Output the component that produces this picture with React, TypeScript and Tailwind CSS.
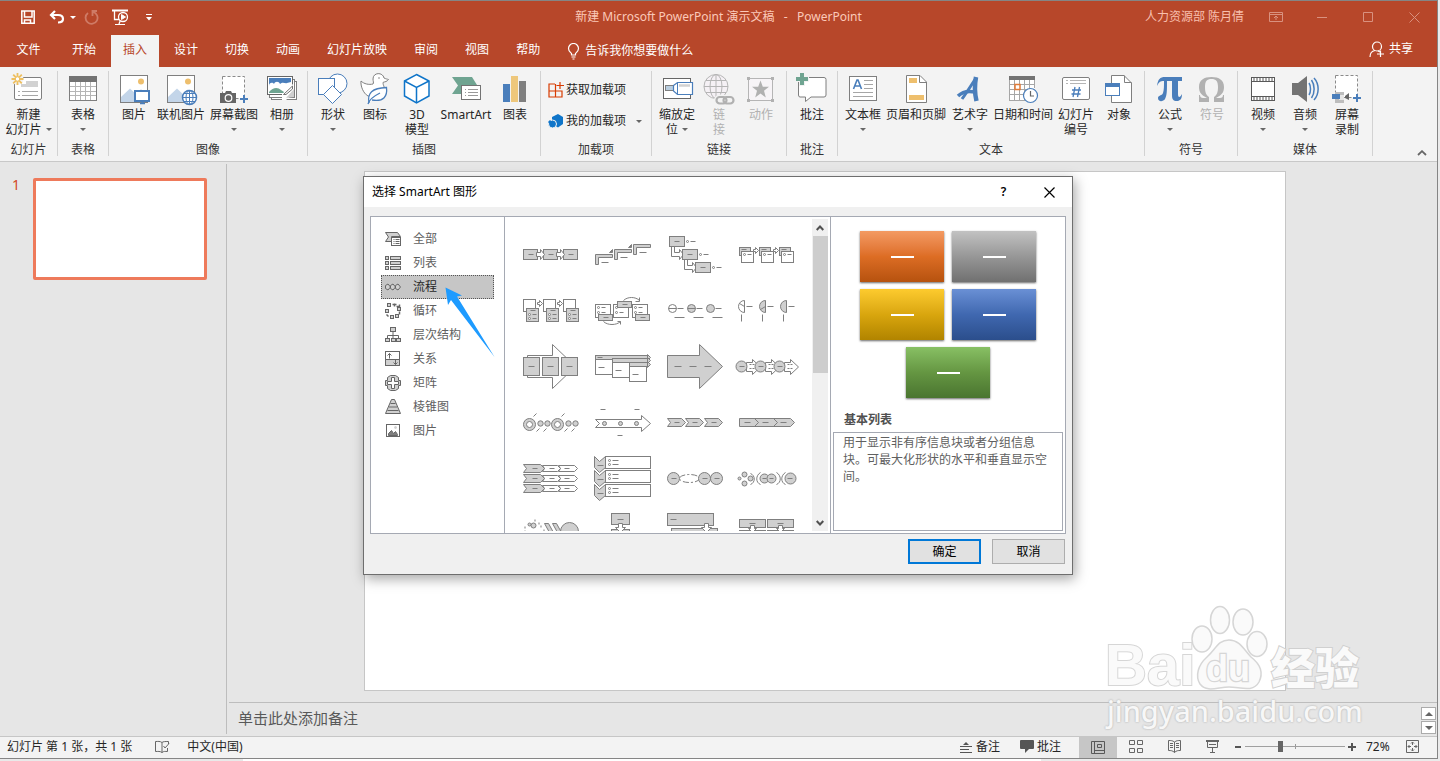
import React from "react";

type Kids = { children?: React.ReactNode };

const G = "#7f7f7f";
const B = "#4a7ebb";
const F = "#d0d0d0";

function Ico({ children }: Kids) {
  return (
    <svg width="32" height="32" viewBox="0 0 32 32" fill="none" className="block shrink-0 overflow-visible" aria-hidden="true">
      {children}
    </svg>
  );
}

function Caret({ className = "" }: { className?: string }) {
  return (
    <svg width="6" height="3" viewBox="0 0 6 3" className={`inline-block ${className}`} aria-hidden="true">
      <path d="M0 0H6L3 3Z" fill="currentColor" />
    </svg>
  );
}

function Cmd({ icon, lines, w, caret, inlineCaret, disabled }: { icon: React.ReactNode; lines: string[]; w: string; caret?: boolean; inlineCaret?: boolean; disabled?: boolean }) {
  return (
    <button type="button" disabled={disabled} className={`flex shrink-0 flex-col items-center ${w} ${disabled ? "text-[#b1b1b1]" : "text-[#262626]"}`}>
      {icon}
      <span className="mt-[3px] block whitespace-nowrap leading-[15px]">
        {lines.map((l, i) => (
          <span key={l} className="flex items-center justify-center gap-1">
            {l}
            {inlineCaret && i === lines.length - 1 && <Caret className="text-[#666]" />}
          </span>
        ))}
      </span>
      {caret && <Caret className="mt-[6px] text-[#666]" />}
    </button>
  );
}

function Group({ title, children }: { title: string; children: React.ReactNode }) {
  return (
    <section aria-label={title} className="flex shrink-0 flex-col justify-between border-r border-[#d2d2d2] px-1">
      <div className="flex items-start justify-center">{children}</div>
      <div className="text-center leading-3 text-[#333]">{title}</div>
    </section>
  );
}

/* ---------- ribbon icons ---------- */

const PictureBase = () => (
  <>
    <rect x="2.5" y="3.5" width="27" height="27" fill="#fff" stroke={G} />
    <circle cx="23" cy="9.5" r="3" fill="#eebf6d" />
    <path d="M3 25L12 16.500L22 26V30H3Z" fill="#c3d5e9" />
    <path d="M17 22L23 17L29 22V30H22Z" fill="#dbe5f1" />
  </>
);

const icons = {
  newSlide: (
    <Ico>
      <g transform="translate(-2 0)">
        <rect x="3.500" y="5.500" width="27" height="22" rx="1.500" fill="#fff" stroke={G} />
        <path d="M15 9H27V15H10V12H15Z" fill="#d2d2d2" />
        <path d="M7 19.500H9M11 19.500H27M7 23.500H9M11 23.500H27" stroke="#a6a6a6" />
        <circle cx="6.500" cy="7" r="6" fill="#f3f3f3" />
        <path d="M6.500 1V13M.5 7H12.500M2.200 2.700L10.800 11.300M10.800 2.700L2.200 11.300" stroke="#eebf5f" strokeWidth="1.800" />
        <circle cx="6.500" cy="7" r="2.200" fill="#fff" stroke="#eebf5f" />
      </g>
    </Ico>
  ),
  table: (
    <Ico>
      <rect x="2.500" y="4.500" width="27" height="24" fill="#fff" stroke={G} />
      <rect x="2" y="4" width="28" height="6" fill="#737373" />
      <path d="M8.500 10V28M13.500 10V28M18.500 10V28M23.500 10V28M3 14.500H29M3 19.500H29M3 23.500H29" stroke="#b5b5b5" />
    </Ico>
  ),
  picture: (
    <Ico>
      <PictureBase />
      <rect x="17" y="19" width="14" height="10" fill="#fff" stroke={B} strokeWidth="2" />
      <path d="M22 31.500H27" stroke={B} strokeWidth="1.500" />
      <path d="M24.500 29V32" stroke={B} strokeWidth="2" />
    </Ico>
  ),
  online: (
    <Ico>
      <PictureBase />
      <circle cx="24.500" cy="25.500" r="7" fill="#fff" stroke={B} strokeWidth="1.500" />
      <path d="M17.500 25.500H31.500M24.500 18.500V32.500M19 21.500H30M19 29.500H30" stroke={B} />
      <ellipse cx="24.500" cy="25.500" rx="3.500" ry="7" stroke={B} />
    </Ico>
  ),
  screenshot: (
    <Ico>
      <rect x="4.500" y="4.500" width="22" height="22" fill="#fff" stroke="#8a8a8a" strokeDasharray="3 2" />
      <path d="M2 21H7L8 19H13L14 21H18V31H2Z" fill="#666" />
      <circle cx="10.500" cy="26" r="3.300" stroke="#fff" strokeWidth="1.200" fill="#666" />
      <path d="M22 27H30M26 23V31" stroke={B} strokeWidth="2" />
    </Ico>
  ),
  album: (
    <Ico>
      <rect x="5.500" y="9.500" width="25" height="18" fill="#fff" stroke={G} />
      <rect x="3.500" y="7.500" width="25" height="18" fill="#fff" stroke={G} />
      <rect x="1.500" y="4.500" width="25" height="18" fill="#fff" stroke="#666" />
      <rect x="3" y="6" width="22" height="8" fill={B} />
      <path d="M3 14C3 10 7 10 8 12C9 9 13 9 14 12C17 9 19 12 21 11L25 10V15H3Z" fill="#fff" />
      <path d="M3 20C7 15 12 15 15 18L18 20V21H3Z" fill="#6fa491" />
      <path d="M16 22L27 12V22L20 28H16Z" fill="#fff" />
      <path d="M17.500 22.500L26.500 14V17L20 22.500Z" fill="#fff" stroke="#737373" />
      <path d="M20 26L28 17V25Z" fill="#cfcfcf" />
    </Ico>
  ),
  shapes: (
    <Ico>
      <circle cx="20.500" cy="11.500" r="9.500" fill="#fff" stroke={B} />
      <rect x="1.500" y="6.500" width="16" height="16" fill="#fff" stroke={B} />
      <path d="M15.500 13.500L24.500 22.500L15.500 31.500L6.500 22.500Z" fill="#fff" stroke={B} />
    </Ico>
  ),
  duck: (
    <Ico>
      <path d="M2 9C5 12 10 13 14 12C15 11 14 9 14 7C14 0 24 0 25 6C27 7 28 7 29.500 7.500C28 9.500 26 10 24.500 10C23 12 26 15 26 19C25 25 17 27 9 24C4 21 1.500 14 2 9Z" fill="#fff" stroke={G} />
      <circle cx="20" cy="6" r=".8" fill={G} />
      <path d="M10 31C8 21 13 16 27.500 15.500C28.500 24 25 30 13 28" fill="#fff" stroke={B} strokeWidth="1.300" />
      <path d="M9 32C10 28 15 24 21 21" stroke={B} strokeWidth="1.300" />
    </Ico>
  ),
  cube: (
    <Ico>
      <path d="M15.500 2.500L28 9V24L15.500 31L3.500 24V9Z" fill="#fff" stroke="#0f75c9" strokeWidth="1.500" />
      <path d="M3.500 9L15.500 15.500L28 9M15.500 15.500V31" stroke="#0f75c9" strokeWidth="1.500" />
    </Ico>
  ),
  smartart: (
    <Ico>
      <path d="M2 5H22L27 13H11V22H2L8 13.500Z" fill="#6fa491" />
      <rect x="11.500" y="13.500" width="19" height="14" fill="#fff" stroke="#737373" />
      <path d="M15 17.500H16M18 17.500H28M15 20.500H16M18 20.500H28M15 23.500H16M18 23.500H28" stroke="#999" />
    </Ico>
  ),
  chart: (
    <Ico>
      <path d="M4 12H11V30H4Z" fill={B} />
      <path d="M12 4H19V30H12Z" fill="#eec77b" />
      <path d="M20 9H27V30H20Z" fill="#7f7f7f" />
    </Ico>
  ),
  zoom: (
    <Ico>
      <rect x="2.500" y="6.500" width="27" height="20" fill="#fff" stroke="#666" />
      <rect x="4.500" y="13.500" width="8" height="5" fill="#b9cee0" stroke={G} />
      <path d="M12.500 13.500L16.500 10.500H31.500V22.500H16.500L12.500 19Z" fill="#fff" stroke={B} strokeWidth="1.200" />
      <path d="M16.500 11V22" stroke={B} />
      <path d="M18 13.500H29" stroke="#d2d2d2" strokeWidth="2.500" />
    </Ico>
  ),
  link: (
    <Ico>
      <circle cx="13" cy="14.500" r="12" stroke="#b5b5b5" fill="#f5f1f5" />
      <path d="M1 14.500H25M13 2.500V26.500M3 8.500H23M3 20.500H23" stroke="#b5b5b5" />
      <ellipse cx="13" cy="14.500" rx="6" ry="12" stroke="#b5b5b5" />
      <rect x="13.500" y="25" width="10" height="6.500" rx="3.200" stroke="#f3f3f3" strokeWidth="5" />
      <rect x="13.500" y="25" width="10" height="6.500" rx="3.200" stroke="#b1b1b1" strokeWidth="2.200" />
      <rect x="20.500" y="25" width="10" height="6.500" rx="3.200" stroke="#b1b1b1" strokeWidth="2.200" />
    </Ico>
  ),
  action: (
    <Ico>
      <rect x="3.500" y="6.500" width="24" height="22" fill="#f7f4f7" stroke="#b5b5b5" />
      <path d="M2 5H5V8H2ZM26 5H29V8H26ZM2 27H5V30H2ZM26 27H29V30H26Z" fill="#b1b1b1" />
      <path d="M15.500 8.500L17.800 14.800H24L19 18.800L20.800 25.500L15.500 21.500L10.200 25.500L12 18.800L7 14.800H13.200Z" fill="#b1b1b1" />
    </Ico>
  ),
  comment: (
    <Ico>
      <path d="M4 5.500H28Q30 5.500 30 7.500V23Q30 25 28 25H15L9.500 29.500V25H4Q2.500 25 2.500 23V7Z" fill="#fff" stroke={G} />
      <path d="M6 0V14M-1 7H13" stroke="#f3f3f3" strokeWidth="6" />
      <path d="M6 1V13M0 7H12" stroke="#6fa491" strokeWidth="4" />
    </Ico>
  ),
  textbox: (
    <Ico>
      <rect x="2.500" y="4.500" width="27" height="24" fill="#fff" stroke={G} />
      <path d="M6.500 17L10 8H11L14.500 17M7.700 14H13.300" stroke={B} strokeWidth="1.600" />
      <path d="M17 8.500H26M17 12.500H26M17 16.500H26M6 20.500H26M6 24.500H26" stroke="#a6a6a6" />
    </Ico>
  ),
  header: (
    <Ico>
      <path d="M6.500 3.500H20L26.500 10V30.500H6.500Z" fill="#fff" stroke={G} />
      <path d="M19.500 3.500V10.500H26.500" stroke={G} />
      <path d="M9 6H17V11H9ZM9 23H24V28H9Z" fill="#eebf6d" />
    </Ico>
  ),
  wordart: (
    <Ico>
      <path d="M8 27C13 20 18 12 22 6" stroke={B} strokeWidth="3" />
      <path d="M22 5C20.500 13 20.500 21 22.500 29" stroke={B} strokeWidth="4.500" />
      <path d="M4 24C9 19 14 18.500 21 20" stroke={B} strokeWidth="3.500" />
    </Ico>
  ),
  date: (
    <Ico>
      <rect x="2.500" y="5.500" width="25" height="23" fill="#fff" />
      <path d="M2.500 8V28.500M7.500 8V28M12.500 8V28M17.500 8V28M22.500 8V28M27.500 8V16M3 12.500H28M3 17.500H28M3 22.500H20M2 28.500H18" stroke="#a6a6a6" />
      <path d="M2 4H28V8H2Z" fill="#737373" />
      <rect x="8" y="12.500" width="5" height="5" fill="#fff" stroke="#e07b39" strokeWidth="1.500" />
      <circle cx="23.500" cy="23.500" r="7" fill="#fff" stroke={B} strokeWidth="1.200" />
      <path d="M23.500 19V24H27" stroke="#666" strokeWidth="1.200" />
    </Ico>
  ),
  number: (
    <Ico>
      <rect x="2.500" y="5.500" width="27" height="22" rx="1.500" fill="#fff" stroke={G} />
      <path d="M6 8.500H8M10 8.500H26M6 11.500H8M10 11.500H26" stroke="#b5b5b5" />
      <path d="M15 15L13 25M19.500 15L17.500 25M12 18H21M11.500 22H20.500" stroke={B} strokeWidth="1.300" />
    </Ico>
  ),
  object: (
    <Ico>
      <path d="M8.500 3.500H21L28.500 11V30.500H8.500Z" fill="#fff" stroke={G} />
      <path d="M21.500 3.500V10.500H28.500" stroke={G} />
      <rect x="2.500" y="11.500" width="14" height="12" fill="#fff" stroke={B} />
      <path d="M2 11H17V15H2Z" fill={B} />
    </Ico>
  ),
  pi: (
    <Ico>
      <path d="M3 14C4 7 6 5 11 5H28V9H24V22C24 26 26 26 28 22C28 27 26 29 23 29C19 29 18 27 18 23V9H13C13 19 13 23 11 27C9 30 4 30 4 26C4 23 8 24 9 21C10 18 10 14 10 9C6 9 5 10 3 14Z" fill={B} />
    </Ico>
  ),
  omega: (
    <Ico>
      <path d="M3 30V23H4C4 25 5 26 7 26H11C5 23 3 20 3 15C3 8 8 5 15.500 5C23 5 28 8 28 15C28 20 26 23 20 26H24C26 26 27 25 27 23H28V30H18V25C21 23 22 20 22 15C22 9 20 7 15.500 7C11 7 9 9 9 15C9 20 10 23 13 25V30Z" fill="#b1b1b1" />
    </Ico>
  ),
  video: (
    <Ico>
      <rect x="4.500" y="5.500" width="23" height="23" fill="#fff" stroke="#595959" />
      <path d="M4 9.500H28M4 24.500H28" stroke="#595959" />
      <path d="M6.500 7.500H27M6.500 26.500H27" stroke="#595959" strokeWidth="3" strokeDasharray="1 2" />
    </Ico>
  ),
  audio: (
    <Ico>
      <path d="M3 11H9L18 4V30L9 23H3Z" fill="#737373" />
      <path d="M20 11C22 14 22 20 20 23M22.500 8C26 13 26 21 22.500 26M25 6C30.500 12 30.500 22 25 28" stroke={B} strokeWidth="1.500" />
    </Ico>
  ),
  record: (
    <Ico>
      <rect x="4.500" y="3.500" width="22" height="22" fill="#fff" stroke="#8a8a8a" strokeDasharray="3 2" />
      <path d="M4 20H13V31H4Z" fill="#bdbdbd" />
      <path d="M13 23H8V28H13Z" fill="#e6e6e6" />
      <path d="M1 22H9V27H1Z" fill={B} />
      <path d="M14 24L18 21V28L14 26Z" fill="#666" />
      <path d="M22 26H30M26 22V30" stroke={B} strokeWidth="2" />
    </Ico>
  ),
};

/* ---------- SmartArt gallery thumbnails ---------- */

function Thumb({ label, children }: { label: string; children: React.ReactNode }) {
  return (
    <button type="button" aria-label={label} className="h-14 w-[72px]">
      <svg width="72" height="56" viewBox="0 0 72 56" fill="none" stroke={G} className="block" aria-hidden="true">
        <g transform="translate(.5 .5)">{children}</g>
      </svg>
    </button>
  );
}

const R = ({ x, y, w, h, g }: { x: number; y: number; w: number; h: number; g?: boolean }) => <rect x={x} y={y} width={w} height={h} fill={g ? F : "#fff"} />;
const C = ({ x, y, r, g }: { x: number; y: number; r: number; g?: boolean }) => <circle cx={x} cy={y} r={r} fill={g ? F : "#fff"} />;
const D = ({ x, y, w = 5 }: { x: number; y: number; w?: number }) => <path d={`M${x} ${y}h${w}`} />;
const A = ({ x, y }: { x: number; y: number }) => <path d={`M${x} ${y - 1}h2v-2l3 3l-3 3v-2h-2z`} fill="#fff" />;
const Item = ({ x, y, w = 4 }: { x: number; y: number; w?: number }) => (
  <>
    <C x={x} y={y} r={1} />
    <D x={x + 3} y={y} w={w} />
  </>
);
const Chev = ({ x, y, w, h, g }: { x: number; y: number; w: number; h: number; g?: boolean }) => (
  <path d={`M${x} ${y - h}h${w - h}l${h} ${h}l${-h} ${h}h${-(w - h)}l${h - 1} ${-h}z`} fill={g ? F : "#fff"} />
);

const thumbs: [string, React.ReactNode][] = [
  ["基本流程", <>{[8, 28, 48].map((x) => <g key={x}><R x={x} y={23} w={14} h={10} g /><D x={x + 5} y={28} /></g>)}{[21, 41].map((x) => <path key={x} d={`M${x} 26h4v-3l4 5l-4 5v-3h-4z`} fill="#fff" />)}</>],
  ["步骤上移流程", <>{[[8, 28], [27, 23], [46, 18]].map(([x, y]) => <g key={x}><path d={`M${x} ${y}h17v3h-14v7h-3z`} fill={F} /><D x={x + 6} y={y + 8} w={7} /></g>)}<path d="M22 26L25 23V26ZM41 21L44 18V21Z" fill={G} /></>],
  ["步骤下移流程", <>{[0, 13].map((o) => <path key={o} d={`M${12 + o} ${20 + o}v10h8v3l4-5l-4-5v3h-5v-6z`} fill="#fff" />)}{[0, 13, 26].map((o) => <g key={o}><R x={10 + o} y={10 + o} w={15} h={10} g /><D x={15 + o} y={15 + o} /><Item x={28 + o} y={15 + o} w={5} /></g>)}</>],
  ["重点流程", <>{[0, 20, 40].map((o) => <g key={o}><R x={8 + o} y={21} w={11} h={8} g /><D x={10 + o} y={23} /><R x={10 + o} y={25} w={12} h={11} /><Item x={13 + o} y={28} />{o < 40 && <A x={22 + o} y={24} />}</g>)}</>],
  ["交替流", <>{[0, 20, 40].map((o) => <g key={o}><R x={8 + o} y={17} w={12} h={12} /><R x={11 + o} y={26} w={12} h={13} g /><D x={15 + o} y={28} /><Item x={14 + o} y={32} /><Item x={14 + o} y={36} />{o < 40 && <A x={22 + o} y={21} />}</g>)}</>],
  ["连续块状流程", <>{[8, 26, 45].map((x) => <g key={x}><R x={x} y={22} w={15} h={13} /><Item x={x + 3} y={25} /><Item x={x + 3} y={30} /></g>)}{[[11, 32], [30, 19], [48, 32]].map(([x, y]) => <g key={x}><R x={x} y={y} w={14} h={6} g /><D x={x + 5} y={y + 3} /></g>)}<path d="M36 18C40 14 48 14 52 18M52 15V19H48M16 39C20 43 29 43 33 39M30 39H33V42" /></>],
  ["圆形箭头流程", <>{[0, 19, 38].map((o, i) => <g key={o}><C x={13 + o} y={26} r={4} g={i > 0} />{i < 2 && <path d={`M${9 + o} 26h8`} />}<D x={18 + o} y={26} w={6} /><D x={15 + o} y={35} w={10} /></g>)}</>],
  ["饼图流程", <>{[0, 21, 42].map((o, i) => <g key={o}><path d={`M${13 + o} 18a6 6 0 0 0 0 12z`} fill={i === 0 ? "#fff" : F} />{i < 2 && <path d={`M${8 + o} ${i ? 27 : 21}L${13 + o} 24`} />}<D x={15 + o} y={24} w={6} /><path d={`M${10 + o} 32v7`} /></g>)}</>],
  ["流程箭头", <><path d="M12 17H37V6L60 28L37 50V39H12Z" fill="#fff" />{[8, 27, 46].map((x) => <g key={x}><R x={x} y={19} w={16} h={18} g /><D x={x + 5} y={28} w={6} /></g>)}</>],
  ["详细流程", <>{[[8, 17], [25, 20], [42, 24]].map(([x, y]) => <g key={x}><R x={x} y={y} w={52 + 8 - x} h={4} g /><path d={`M60 ${y - 1}L63 ${y + 2}L60 ${y + 5}Z`} fill={F} /><R x={x} y={y + 4} w={17} h={15} /><D x={x + 3} y={y + 12} w={6} /></g>)}<D x={10} y={19} /></>],
  ["连续箭头流程", <><path d="M8 17H40V6L63 28L40 50V39H8Z" fill={F} />{[15, 30, 45].map((x) => <D key={x} x={x} y={28} w={7} />)}</>],
  ["流程箭头列表", <>{[0, 19, 38].map((o) => <g key={o}><path d={`M${15 + o} 24h6v-3l8 7.500l-8 7.500v-3h-6z`} fill="#fff" /><path d={`M${18 + o} 26h6M${18 + o} 30h6`} strokeDasharray="2 1" /><C x={10 + o} y={28} r={5.500} g /><D x={8 + o} y={28} /></g>)}</>],
  ["圆形重点日程表", <>{[0, 28].map((o) => <g key={o}><C x={14 + o} y={30} r={6} g /><C x={14 + o} y={30} r={3} /><C x={25 + o} y={29} r={2.700} g /><C x={32 + o} y={29} r={2.700} g /><path d={`M${18 + o} 22l3-3M${21 + o} 37l3-3M${28 + o} 37l3-3`} /></g>)}</>],
  ["基本日程表", <><path d="M8 25H54V21L63 29L54 37V33H8L12 29Z" fill="#fff" />{[17, 33, 49].map((x) => <C key={x} x={x} y={29} r={2} g />)}<path d="M13 15h5M47 15h5M30 41h5" /></>],
  ["基本 V 形流程", <>{[8, 26, 45].map((x) => <g key={x}><Chev x={x} y={28} w={18} h={4} g /><D x={x + 7} y={28} /></g>)}</>],
  ["闭合 V 形流程", <><path d="M8 24H59L63 28L59 32H8Z" fill={F} /><path d="M23 24l4 4l-4 4M42 24l4 4l-4 4" /><D x={13} y={28} w={6} /><D x={31} y={28} w={6} /><D x={49} y={28} w={6} /></>],
  ["V 形列表", <>{[18, 28, 38].map((y) => <g key={y}><Chev x={43} y={y} w={19} h={3} /><Chev x={27} y={y} w={18} h={3} /><Chev x={8} y={y} w={21} h={4} g /><path d={`M17 ${y}h5M34 ${y}h5M49 ${y}h5`} /></g>)}</>],
  ["垂直 V 形列表", <>{[0, 14, 28].map((o) => <g key={o}><R x={18} y={6 + o} w={45} h={12} /><path d={`M7 ${6 + o}l5 5l6-5v11l-6 5l-5-5z`} fill={F} /><D x={10} y={15 + o} w={6} /><Item x={22} y={10 + o} w={6} /><Item x={22} y={14 + o} w={6} /></g>)}</>],
  ["子步骤流程", <><ellipse cx="30" cy="28" rx="10" ry="4" strokeDasharray="6 2 2 2" />{[14, 45, 57].map((x) => <g key={x}><C x={x} y={28} r={6} g /><D x={x - 2} y={28} /></g>)}</>],
  ["阶段流程", <><C x={8} y={28} r={1.500} g /><C x={13} y={24} r={2.500} g /><C x={19} y={28} r={2.500} g /><C x={13} y={33} r={2.500} g /><path d="M19 23C24 25 24 32 19 34M29 22C24 25 24 32 29 34M45 22C50 25 50 32 45 34M54 22C49 25 49 32 54 34" /><C x={33} y={28} r={4.500} g /><C x={40} y={28} r={4.500} g /><path d="M31 28h4M38 28h4" /><C x={59} y={28} r={5.500} g /><D x={56} y={28} /></>],
  ["随机至结果流程", <><path d="M9 21h1M13 18h1M9 25h1M25 20h1M28 24h1M19 14h1M23 17h1" strokeWidth="2" /><C x={14} y={18} r={1.500} g /><C x={18} y={19} r={2.500} g /><path d="M29 17h4l5 9h-4zM37 17h4l5 9h-4z" fill={F} /><C x={54} y={25} r={9} g /></>],
  ["垂直流程", <><R x={24} y={7} w={18} h={11} g /><D x={30} y={13} w={6} /><R x={24} y={23} w={18} h={11} g /><path d="M31 17h4v4h3l-5 5l-5-5h3z" fill="#fff" /></>],
  ["交错流程", <><R x={8} y={7} w={46} h={12} g /><D x={11} y={13} w={6} /><R x={12} y={22} w={46} h={12} g /><path d="M45 17h4v4h3l-5 5l-5-5h3z" fill="#fff" /></>],
  ["流程列表", <>{[0, 28].map((o) => <g key={o}><R x={8 + o} y={13} w={26} h={8} g /><D x={18 + o} y={17} w={6} /><R x={8 + o} y={24} w={26} h={8} g /><path d={`M${19 + o} 19h4v3h2l-4 4l-4-4h2z`} fill="#fff" /></g>)}</>],
];

/* ---------- category list ---------- */

const categories: [string, React.ReactNode][] = [
  ["全部", <><path d="M0 1H12L15 5H6V10H0L3 5.500Z" fill={F} /><rect x="6" y="6" width="9" height="8" fill="#fff" /><path d="M8 8h1M10 8h4M8 10h1M10 10h4M8 12h1M10 12h4" /></>],
  ["列表", <>{[1, 6, 11].map((y) => <g key={y}><rect x="0" y={y} width="3" height="3" fill={F} /><rect x="5" y={y} width="10" height="3" fill={F} /></g>)}</>],
  ["流程", <>{[0, 5, 10].map((x) => <path key={x} d={`M${x} 6L${x + 2.5} 4.500L${x + 5} 7.500L${x + 2.5} 10.500L${x} 9Z`} fill={F} />)}</>],
  ["循环", <><rect x="2" y="0" width="3" height="3" fill={F} /><rect x="12" y="4" width="3" height="3" fill={F} /><rect x="10" y="11" width="3" height="3" fill={F} /><rect x="5" y="12" width="3" height="3" fill={F} /><rect x="0" y="6" width="3" height="3" fill={F} /><path d="M7 1h4M9 0v3M14 1v2h-3M1 11l2 2M14 8v3" strokeWidth="1.500" /></>],
  ["层次结构", <><path d="M7.500 4V8M2 11V8H13V11M7.500 8V11" /><rect x="5" y="0" width="5" height="4" fill={F} /><rect x="0" y="11" width="4" height="3" fill={F} /><rect x="6" y="11" width="4" height="3" fill={F} /><rect x="11" y="11" width="4" height="3" fill={F} /></>],
  ["关系", <><rect x="0" y="0" width="14" height="14" fill="#fff" /><path d="M0 8H14V14H0Z" fill={F} /><path d="M4 7V2M2 4L4 2L6 4M10 8V13M8 11L10 13L12 11" /></>],
  ["矩阵", <><path d="M5 0H10L13 2V5H15V10H13V13L10 15H5L2 13V10H0V5H2V2Z" fill={F} /><path d="M6 2H9V6H13V9H9V13H6V9H2V6H6Z" fill="#fff" /></>],
  ["棱锥图", <><path d="M6 0H9L15 14H0Z" fill={F} /><path d="M5 4H10M3.500 7.500H11.500M2 11H13" /></>],
  ["图片", <><rect x="1" y="1" width="13" height="12" fill="#fff" /><path d="M3 12V10L6 7L8 10L10 8L12 11V12Z" fill={G} /><circle cx="10" cy="4" r="1" fill={F} stroke={F} /></>],
];

const tiles = [
  "bg-linear-to-b from-[#f39a62] via-[#dd6d24] to-[#b6520e]",
  "bg-linear-to-b from-[#c2c2c2] via-[#979797] to-[#707070]",
  "bg-linear-to-b from-[#fdcb2e] via-[#d9a60e] to-[#b18400]",
  "bg-linear-to-b from-[#6a90d5] via-[#4068b0] to-[#2b4e8c]",
  "bg-linear-to-b from-[#88c064] via-[#659642] to-[#4a7530]",
];

function SmartArtDialog() {
  return (
    <div role="dialog" aria-label="选择 SmartArt 图形" className="absolute right-px left-0 top-[175px] mx-auto w-[710px] border border-[#6e6e6e] bg-[#f0f0f0] text-black shadow-[2px_4px_12px_rgba(0,0,0,0.35)]">
      <header className="flex h-[30px] items-center bg-white pl-2">
        <h2 className="flex-1">选择 SmartArt 图形</h2>
        <button type="button" aria-label="帮助" className="w-[45px] text-center font-semibold">?</button>
        <button type="button" aria-label="关闭" className="flex w-[46px] justify-center">
          <svg width="11" height="11" viewBox="0 0 11 11" stroke="#000" strokeWidth="1.200"><path d="M.5 .5L10.500 10.500M10.500 .5L.5 10.500" /></svg>
        </button>
      </header>
      <div className="mx-[6px] mt-[9px] flex h-[318px] border border-[#a5a9b3] bg-white">
        <ul className="w-[134px] shrink-0 border-r border-[#a5a9b3] px-[10px] py-[10px]">
          {categories.map(([name, icon], i) => (
            <li key={name}>
              <button
                type="button"
                className={`flex h-6 w-full items-center gap-3 border border-dotted pl-[3px] ${i === 2 ? "border-[#555] bg-[#c6c6c6] text-[#262626]" : "border-transparent text-[#606060]"}`}
              >
                <svg width="16" height="16" viewBox="-.5 -.5 16 16" fill="none" stroke="#666" className="shrink-0" aria-hidden="true">{icon}</svg>
                {name}
              </button>
            </li>
          ))}
        </ul>
        <div className="flex min-w-0 flex-1 justify-between pl-[10px] pr-[2px] pb-[2px]">
          <div className="grid grid-cols-[repeat(4,72px)] content-start overflow-hidden pt-[9px]">
            {thumbs.map(([name, art]) => <Thumb key={name} label={name}>{art}</Thumb>)}
          </div>
          <div className="mt-[2px] flex w-4 flex-col items-center bg-[#f0f0f0]">
            <button type="button" aria-label="向上滚动" className="flex h-[17px] items-center">
              <svg width="8" height="6" viewBox="0 0 8 6" fill="none" stroke="#505050" strokeWidth="2"><path d="M.7 5L4 1.500L7.300 5" /></svg>
            </button>
            <div className="h-[137px] w-[15px] bg-[#cdcdcd]" />
            <button type="button" aria-label="向下滚动" className="mt-auto flex h-[17px] items-center">
              <svg width="8" height="6" viewBox="0 0 8 6" fill="none" stroke="#505050" strokeWidth="2"><path d="M.7 1L4 4.500L7.300 1" /></svg>
            </button>
          </div>
        </div>
        <div className="flex w-[235px] shrink-0 flex-col border-l border-[#a5a9b3] px-[2px] pb-[2px]">
          <div className="flex flex-wrap justify-center gap-x-2 gap-y-[7px] px-6 pt-[14px]">
            {tiles.map((t) => (
              <div key={t} className={`flex h-[51px] w-[84px] items-center justify-center shadow-[0_1px_2px_rgba(0,0,0,0.6)] ${t}`}>
                <div className="h-[2px] w-[23px] bg-white" />
              </div>
            ))}
          </div>
          <h3 className="mt-[14px] pl-[11px] font-bold leading-4 text-[#505050]">基本列表</h3>
          <p className="mt-1 flex-1 border border-[#a5a9b3] pt-px pl-[9px] leading-[17px] whitespace-nowrap text-[#606060]">
            用于显示非有序信息块或者分组信息
            <br />
            块。可最大化形状的水平和垂直显示空
            <br />
            间。
          </p>
        </div>
      </div>
      <footer className="flex justify-end gap-[11px] px-[7px] pt-[5px] pb-[10px]">
        <button type="button" className="h-[25px] w-[73px] border-2 border-[#0078d7] bg-[#e1e1e1]">确定</button>
        <button type="button" className="h-[25px] w-[73px] border border-[#adadad] bg-[#e1e1e1]">取消</button>
      </footer>
      <svg width="50" height="71" viewBox="0 0 50 71" className="pointer-events-none absolute top-[110px] left-[81px]" aria-hidden="true">
        <path d="M.5 .5L17 8.500L12 9.500L49.500 70L6 13L3 18Z" fill="#1e9bff" />
      </svg>
    </div>
  );
}

function Watermark() {
  return (
    <div className="pointer-events-none absolute right-[72px] bottom-[27px] w-[260px]">
      <div className="flex items-end text-[#fafafa]">
        <span className="w-[84px] font-['Liberation_Sans',sans-serif] text-[58px] leading-[52px] font-bold whitespace-nowrap [-webkit-text-stroke:2px_#d6d6d6] [paint-order:stroke]">Bai</span>
        <svg width="79" height="86" viewBox="0 0 79 86" fill="#fafafa" stroke="#d6d6d6" strokeWidth="1.500" className="shrink-0 overflow-visible" aria-hidden="true">
          <ellipse cx="13" cy="34" rx="10" ry="13" />
          <ellipse cx="31" cy="15" rx="9.500" ry="13.500" />
          <ellipse cx="54" cy="17" rx="10" ry="13" />
          <ellipse cx="68" cy="39" rx="10" ry="12.500" />
          <path d="M40 35C51 35 55 45 62 52C71 59 75 67 70 77C64 88 51 82 40 82C29 82 18 88 11 79C6 71 9 60 18 52C27 44 29 35 40 35Z" />
          <text x="39" y="76" textAnchor="middle" fontSize="36" fontWeight="bold" fontFamily="Liberation Sans, sans-serif" paintOrder="stroke" strokeWidth="2.500">du</text>
        </svg>
        <span className="pl-[3px] font-['Noto_Sans_CJK_SC',sans-serif] text-[44px] leading-[50px] font-black whitespace-nowrap [-webkit-text-stroke:2px_#d0d0d0] [paint-order:stroke]">经验</span>
      </div>
      <div className="pl-[2px] text-[29px] leading-[40px] font-medium whitespace-nowrap text-[#f7f7f7] [text-shadow:0_0_2px_#bbb,0_0_2px_#c4c4c4]">jingyan.baidu.com</div>
    </div>
  );
}

const tabs = ["开始", "插入", "设计", "切换", "动画", "幻灯片放映", "审阅", "视图", "帮助"];

export default function App() {
  return (
    <div className="flex h-screen flex-col overflow-hidden bg-[#ebebeb] pr-[2px] font-['Noto_Sans','Noto_Sans_CJK_SC',sans-serif] text-xs">
      <div className="relative flex min-h-0 flex-1 flex-col border-t border-r border-b border-[#858585] bg-[#e6e6e6]">
        <header className="bg-[#b7472a] text-white">
          <div className="grid h-[34px] grid-cols-[1fr_auto_1fr] items-center pb-[2px]">
            <div className="flex items-center pl-5">
              <button type="button" aria-label="保存">
                <svg width="16" height="16" viewBox="0 0 16 16" fill="none" stroke="#fff" strokeWidth="1.500"><path d="M1.800 2H14.200V14.200H1.800ZM4.500 2V8H12V2" /><path d="M4.500 14V11H10.500V14" /></svg>
              </button>
              <button type="button" aria-label="撤消" className="ml-[13px] flex items-center gap-[5px]">
                <svg width="16" height="14" viewBox="0 0 16 14" fill="none" stroke="#fff" strokeWidth="2.200"><path d="M6 1L2 5L6 9M2 5H9C13 5 14 7 14 9C14 11 12 12.500 9 12.500" /></svg>
                <Caret />
              </button>
              <button type="button" aria-label="重做" className="ml-2">
                <svg width="15" height="15" viewBox="0 0 15 15" fill="none" stroke="#cf7b66" strokeWidth="1.800"><path d="M9 2A6 6 0 1 1 4 3M13 1H8.500V6" /></svg>
              </button>
              <button type="button" aria-label="从头开始" className="ml-[13px]">
                <svg width="17" height="16" viewBox="0 0 17 16" fill="none" stroke="#fff"><path d="M0 1.500H16" strokeWidth="2" /><path d="M2.500 2V10.500H7M7 15L8.500 11" strokeWidth="1.300" /><circle cx="11" cy="8" r="4.500" fill="#b7472a" strokeWidth="1.300" /><path d="M9.500 5.500L13.500 8L9.500 10.500Z" fill="#fff" /><path d="M3 15.500H13" /></svg>
              </button>
              <button type="button" aria-label="自定义快速访问工具栏" className="ml-[17px]">
                <svg width="6" height="7" viewBox="0 0 6 7" fill="#fff"><path d="M0 0H6V1H0ZM0 3H6L3 6.500Z" /></svg>
              </button>
            </div>
            <h1 className="whitespace-pre text-[#fbc9b9]">新建 Microsoft PowerPoint 演示文稿   -   PowerPoint</h1>
            <div className="flex items-center justify-end text-[#f8bfae]">
              <span className="mr-[9px]">人力资源部 陈月倩</span>
              <button type="button" aria-label="功能区显示选项" className="flex w-[46px] justify-center">
                <svg width="14" height="10" viewBox="0 0 14 10" fill="none" stroke="#d9917f"><path d="M.5 .5H13.500V9.500H.5ZM.5 2.500H13.500M7 8V4M5 6L7 4L9 6" /></svg>
              </button>
              <button type="button" aria-label="最小化" className="flex w-[46px] justify-center">
                <svg width="10" height="10" viewBox="0 0 10 10" stroke="#d9917f"><path d="M0 5.500H10" /></svg>
              </button>
              <button type="button" aria-label="最大化" className="flex w-[46px] justify-center">
                <svg width="10" height="10" viewBox="0 0 10 10" fill="none" stroke="#d9917f"><path d="M.5 .5H9.500V9.500H.5Z" /></svg>
              </button>
              <button type="button" aria-label="关闭窗口" className="flex w-[46px] justify-center">
                <svg width="11" height="11" viewBox="0 0 11 11" stroke="#d9917f"><path d="M.5 .5L10.500 10.500M10.500 .5L.5 10.500" /></svg>
              </button>
            </div>
          </div>
          <nav className="flex h-8 items-stretch gap-[3px] whitespace-nowrap">
            <button type="button" className="w-[57px] pb-[2px]">文件</button>
            {tabs.map((t) => (
              <button key={t} type="button" className={`px-3 pb-[2px] ${t === "插入" ? "bg-[#f3f3f3] text-[#b7472a]" : ""}`}>{t}</button>
            ))}
            <button type="button" className="flex items-center gap-[5px] pl-3">
              <svg width="13" height="17" viewBox="0 0 13 17" fill="none" stroke="#fff" strokeWidth="1.200"><path d="M4.500 12V10.500C3 9 1.500 8 1.500 5.500A5 5 0 0 1 11.500 5.500C11.500 8 10 9 8.500 10.500V12ZM4.500 14H8.500M5.500 16H7.500" /></svg>
              告诉我你想要做什么
            </button>
            <button type="button" className="ml-auto flex items-center gap-1 pr-6 pb-1">
              <svg width="16" height="16" viewBox="0 0 16 16" fill="none" stroke="#fff" strokeWidth="1.200"><circle cx="8" cy="5.500" r="4.500" /><path d="M1 16C1 12 3 10 6 9.500M9 10L11 11M8 13H15M11.500 9.500V16" /></svg>
              共享
            </button>
          </nav>
        </header>

        <div className="flex h-[95px] shrink-0 border-b border-[#c8c8c8] bg-[#f3f3f3] pt-1 pb-[5px]">
          <Group title="幻灯片"><Cmd w="w-[49px] pt-px" icon={icons.newSlide} lines={["新建", "幻灯片"]} inlineCaret /></Group>
          <Group title="表格"><Cmd w="w-[42px] pt-px" icon={icons.table} lines={["表格"]} caret /></Group>
          <Group title="图像">
            <Cmd w="w-[42px] pt-px" icon={icons.picture} lines={["图片"]} />
            <Cmd w="w-[52px] pt-px" icon={icons.online} lines={["联机图片"]} />
            <Cmd w="w-[54px] pt-px" icon={icons.screenshot} lines={["屏幕截图"]} caret />
            <Cmd w="w-[42px] pt-px" icon={icons.album} lines={["相册"]} caret />
          </Group>
          <Group title="插图">
            <Cmd w="w-[42px] pt-px" icon={icons.shapes} lines={["形状"]} caret />
            <Cmd w="w-[42px] pt-px" icon={icons.duck} lines={["图标"]} />
            <Cmd w="w-[42px] pt-px" icon={icons.cube} lines={["3D", "模型"]} />
            <Cmd w="w-[56px] pt-px" icon={icons.smartart} lines={["SmartArt"]} />
            <Cmd w="w-[42px] pt-px" icon={icons.chart} lines={["图表"]} />
          </Group>
          <Group title="加载项">
            <div className="flex w-[102px] flex-col gap-[15px] pt-[11px] pl-[3px] text-[#262626]">
              <button type="button" className="flex h-4 items-center gap-[2px] whitespace-nowrap">
                <svg width="16" height="16" viewBox="0 0 16 16" fill="none" stroke="#d83b01" strokeWidth="1.200" className="shrink-0"><path d="M7 2H1V15H14V9H1M7.500 2V15M12 0V7M8.500 3.500H16" /></svg>
                获取加载项
              </button>
              <button type="button" className="flex h-4 items-center gap-[2px] whitespace-nowrap">
                <svg width="16" height="16" viewBox="0 0 16 16" fill="#0f75c9" className="shrink-0"><path d="M4 4L10 1L15 4V11L10 14.500L4 11Z" /><circle cx="4.500" cy="11" r="4" stroke="#f3f3f3" /><path d="M0 9L2 7L4 9L2 11Z" /></svg>
                我的加载项
                <Caret className="ml-2 text-[#666]" />
              </button>
            </div>
          </Group>
          <Group title="链接">
            <Cmd w="w-[42px] pt-px" icon={icons.zoom} lines={["缩放定", "位"]} inlineCaret />
            <Cmd w="w-[42px] pt-px" icon={icons.link} lines={["链", "接"]} disabled />
            <Cmd w="w-[42px] pt-px" icon={icons.action} lines={["动作"]} disabled />
          </Group>
          <Group title="批注"><Cmd w="w-[42px] pt-px" icon={icons.comment} lines={["批注"]} /></Group>
          <Group title="文本">
            <Cmd w="w-[42px] pt-px" icon={icons.textbox} lines={["文本框"]} caret />
            <Cmd w="w-[64px] pt-px" icon={icons.header} lines={["页眉和页脚"]} />
            <Cmd w="w-[44px] pt-px" icon={icons.wordart} lines={["艺术字"]} caret />
            <Cmd w="w-[62px] pt-px" icon={icons.date} lines={["日期和时间"]} />
            <Cmd w="w-[44px] pt-px" icon={icons.number} lines={["幻灯片", "编号"]} />
            <Cmd w="w-[42px] pt-px" icon={icons.object} lines={["对象"]} />
          </Group>
          <Group title="符号">
            <Cmd w="w-[42px] pt-px" icon={icons.pi} lines={["公式"]} caret />
            <Cmd w="w-[42px] pt-px" icon={icons.omega} lines={["符号"]} disabled />
          </Group>
          <Group title="媒体">
            <Cmd w="w-[42px] pt-px" icon={icons.video} lines={["视频"]} caret />
            <Cmd w="w-[42px] pt-px" icon={icons.audio} lines={["音频"]} caret />
            <Cmd w="w-[42px] pt-px" icon={icons.record} lines={["屏幕", "录制"]} />
          </Group>
          <button type="button" aria-label="折叠功能区" className="mt-auto mr-[10px] ml-auto">
            <svg width="10" height="6" viewBox="0 0 10 6" fill="none" stroke="#666" strokeWidth="1.800"><path d="M1 5L5 1.200L9 5" /></svg>
          </button>
        </div>

        <div className="flex min-h-0 flex-1">
          <aside className="my-[2px] flex w-[227px] shrink-0 items-start border-r border-[#bdbdbd] pt-[14px] pl-3">
            <span className="w-[21px] text-sm leading-[14px] text-[#d24726]">1</span>
            <button type="button" aria-label="幻灯片 1" className="h-[102px] w-[174px] rounded-[2px] border-3 border-[#ee7a5b] bg-white" />
          </aside>
          <main className="ml-[2px] flex min-w-0 flex-1 flex-col">
            <div className="flex min-h-0 flex-1 justify-center pt-[9px] pr-4 pb-[11px]">
              <div className="h-full w-[922px] border border-[#c6c6c6] bg-white" />
            </div>
            <div className="flex h-[34px] shrink-0 border-t border-[#bdbdbd]">
              <textarea aria-label="备注" placeholder="单击此处添加备注" className="h-full min-w-0 flex-1 resize-none bg-transparent pt-[3px] pl-[9px] text-[15px] leading-6 placeholder:text-[#595959]" />
              <div className="mt-1 mr-px flex w-[15px] flex-col">
                <button type="button" aria-label="上一张幻灯片" className="flex h-[13px] items-center justify-center border border-[#ababab] bg-white text-[#666]"><Caret className="h-1 w-2 rotate-180" /></button>
                <button type="button" aria-label="下一张幻灯片" className="mt-px flex h-[13px] items-center justify-center border border-[#ababab] bg-white text-[#666]"><Caret className="h-1 w-2" /></button>
              </div>
            </div>
          </main>
        </div>

        <footer className="flex h-[22px] shrink-0 items-center border-t border-[#c6c6c6] bg-[#f3f3f3] pb-[2px] whitespace-nowrap text-[#262626]">
          <span className="pl-[7px]">幻灯片 第 1 张，共 1 张</span>
          <svg width="15" height="14" viewBox="0 0 15 14" fill="none" stroke="#666" className="mr-[17px] ml-[23px]"><path d="M7 2.500C5 1 3 1.500 .5 1.500V11.500C3 11.500 5 11 7 12.500C9 11 10 11.500 12.500 11.500V8M7 2.500V12.500M7 2.500C8 1.500 10 1.500 13.500 1.500V4M8.500 6L10 8L14 3.500" /></svg>
          <span>中文(中国)</span>
          <button type="button" className="ml-auto flex items-center gap-1">
            <svg width="12" height="12" viewBox="0 0 12 12" fill="none" stroke="#555"><path d="M3 4L6 1L9 4Z" fill="#555" stroke="none" /><path d="M0 5.500H12M0 8.500H9M0 11.500H12" /></svg>
            备注
          </button>
          <button type="button" className="mr-[18px] ml-5 flex items-center gap-[3px]">
            <svg width="14" height="13" viewBox="0 0 14 13" fill="#555"><path d="M1 0H13Q14 0 14 1V8Q14 9 13 9H9L5 13V9H1Q0 9 0 8V1Q0 0 1 0Z" /></svg>
            批注
          </button>
          <button type="button" aria-label="普通视图" className="-mb-[2px] flex h-[21px] w-[38px] items-center justify-center bg-[#c6c6c6]">
            <svg width="14" height="13" viewBox="0 0 14 13" fill="none" stroke="#595959"><path d="M.5 .5H13.500V12.500H.5ZM3.500 .5V12.500M3.500 9.500H13.500M6.500 3.500H10.500V6.500H6.500Z" /></svg>
          </button>
          <button type="button" aria-label="幻灯片浏览" className="flex w-[38px] justify-center">
            <svg width="14" height="13" viewBox="0 0 14 13" fill="none" stroke="#666"><path d="M.5 .5H5.500V4.500H.5ZM8.500 .5H13.500V4.500H8.500ZM.5 8.500H5.500V12.500H.5ZM8.500 8.500H13.500V12.500H8.500Z" /></svg>
          </button>
          <button type="button" aria-label="阅读视图" className="flex w-[38px] justify-center">
            <svg width="13" height="13" viewBox="0 0 13 13" fill="none" stroke="#666"><path d="M6.500 2C4.500 .5 3 .5 .5 .5V10.500C3 10.500 4.500 10.500 6.500 12.500C8.500 10.500 10 10.500 12.500 10.500V.5C10 .5 8.500 .5 6.500 2V12.500M2 3.500H5M2 5.500H5M2 7.500H5M8 3.500H11M8 5.500H11M8 7.500H11" /></svg>
          </button>
          <button type="button" aria-label="幻灯片放映" className="flex w-[38px] justify-center">
            <svg width="13" height="13" viewBox="0 0 13 13" fill="none" stroke="#666"><path d="M0 1H13" strokeWidth="2" /><path d="M1.500 2V7.500H11.500V2M3 4.500H10M6.500 8V12M4 12.500H9" /></svg>
          </button>
          <button type="button" aria-label="缩小" className="ml-1 h-[2px] w-[6px] bg-[#555]" />
          <div className="relative mr-[3px] ml-1 flex items-center">
            <span className="absolute left-[50px] h-[5px] w-px bg-[#999]" />
            <input
              type="range"
              aria-label="缩放"
              min={0}
              max={100}
              defaultValue={35}
              className="relative h-[11px] w-[100px] appearance-none bg-linear-to-b from-transparent from-45% via-[#a0a0a0] via-50% to-transparent to-55% [&::-webkit-slider-thumb]:h-[11px] [&::-webkit-slider-thumb]:w-[5px] [&::-webkit-slider-thumb]:appearance-none [&::-webkit-slider-thumb]:bg-[#666]"
            />
          </div>
          <button type="button" aria-label="放大">
            <svg width="8" height="8" viewBox="0 0 8 8" stroke="#555" strokeWidth="2"><path d="M0 4H8M4 0V8" /></svg>
          </button>
          <span className="ml-[10px] w-10">72%</span>
          <button type="button" aria-label="使幻灯片适应当前窗口" className="mr-[18px]">
            <svg width="13" height="13" viewBox="0 0 13 13" fill="none" stroke="#666"><path d="M.5 .5H12.500V12.500H.5ZM6.500 2V5M5 3.500L6.500 2L8 3.500M6.500 11V8M5 9.500L6.500 11L8 9.500M2 6.500H5M3.500 5L2 6.500L3.500 8M11 6.500H8M9.500 5L11 6.500L9.500 8" /></svg>
          </button>
        </footer>

        <SmartArtDialog />
        <Watermark />
      </div>
      <div className="flex h-[2px] shrink-0">
        <div className="w-[243px] bg-[#e9e9e9]" />
        <div className="w-[798px] bg-white" />
      </div>
    </div>
  );
}
